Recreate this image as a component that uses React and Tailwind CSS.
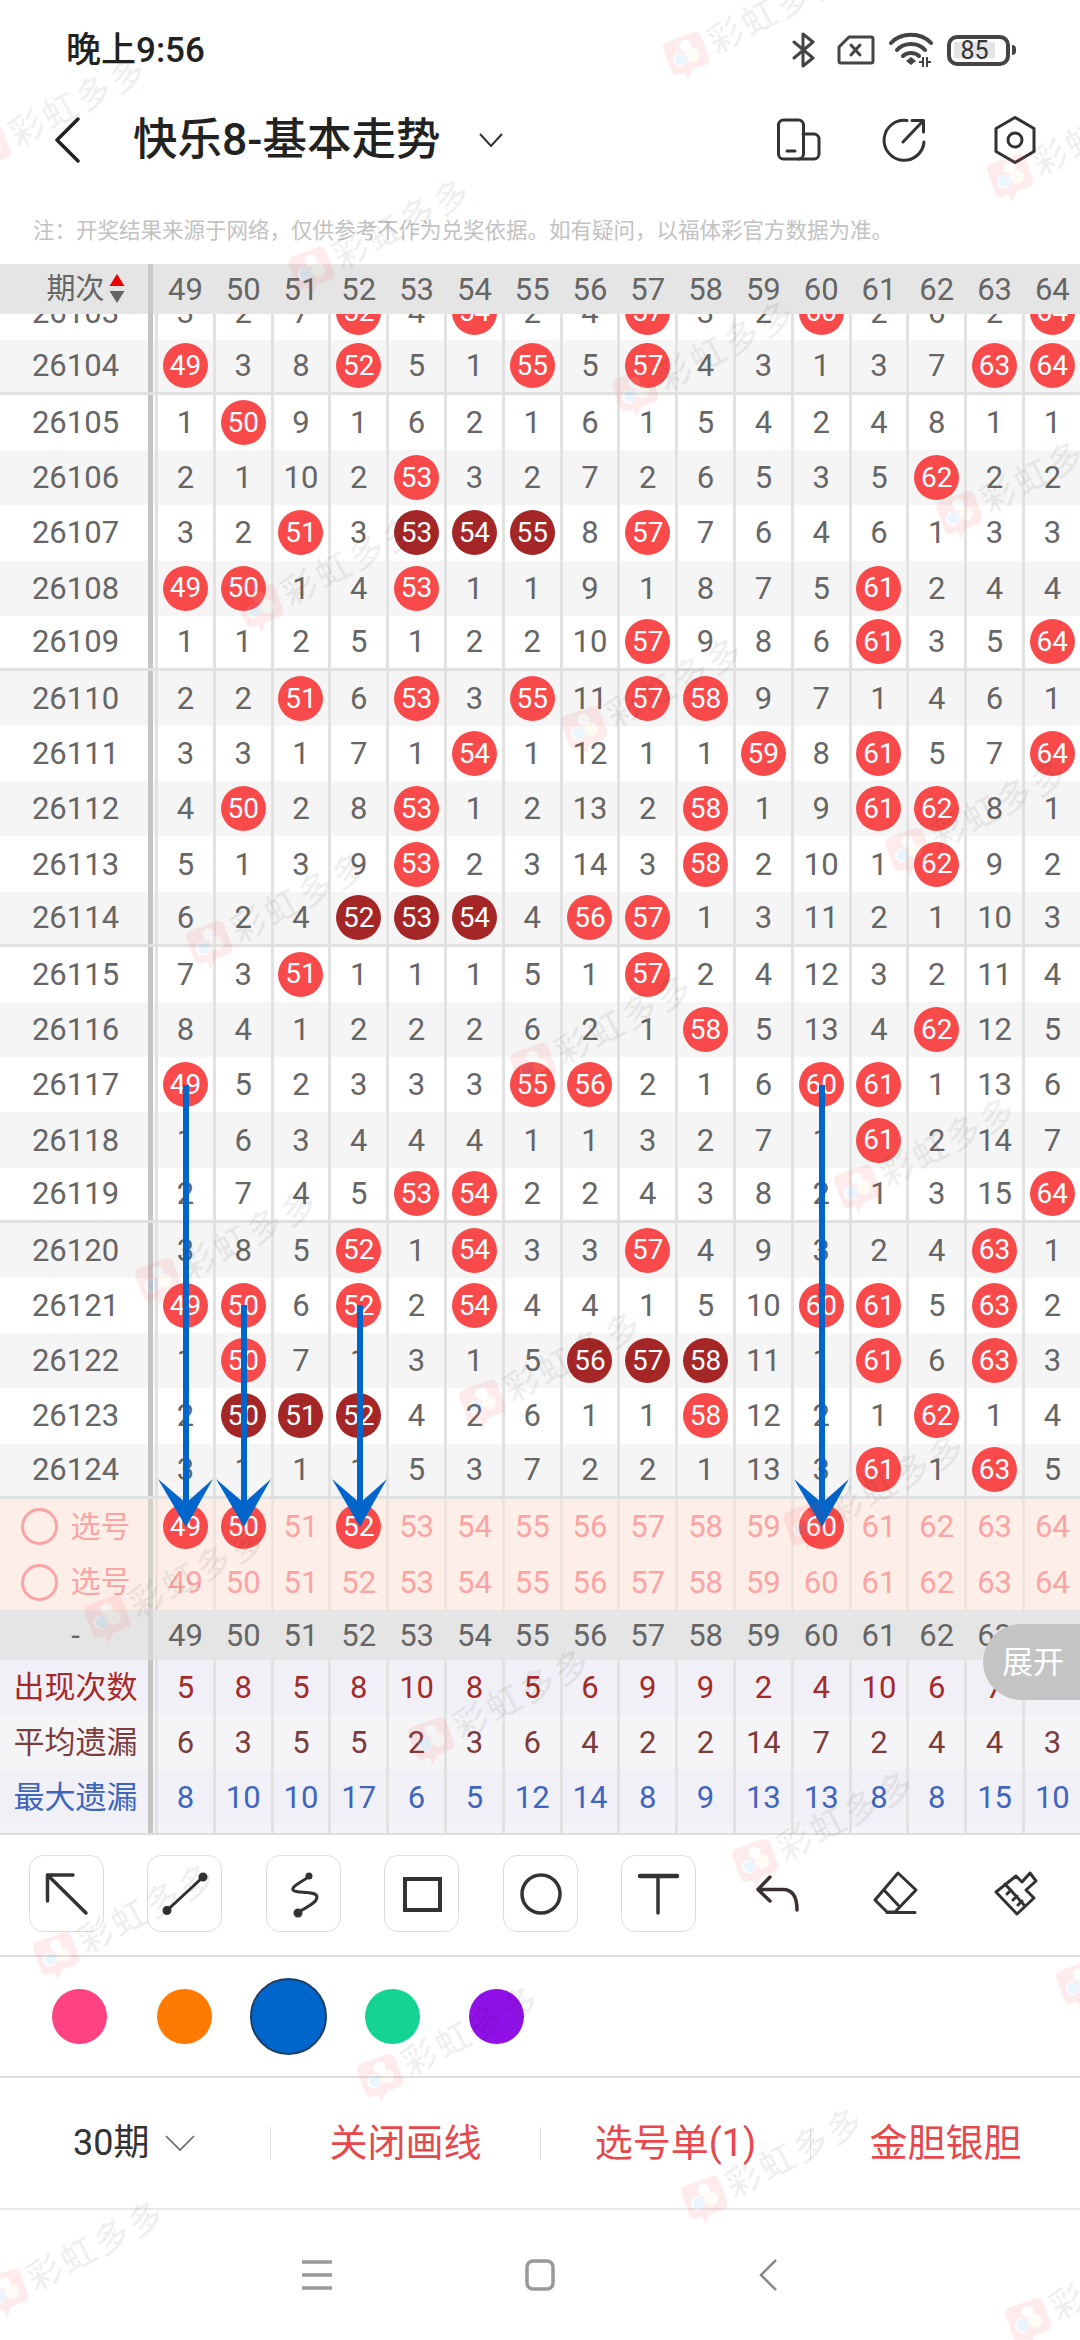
import React from "react";

const COLS = Array.from({ length: 16 }, (_, i) => 49 + i);

const ROWS = [
  ["26103", "3 2 7 52 4 54 2 4 57 3 2 60 2 6 2 64"],
  ["26104", "49 3 8 52 5 1 55 5 57 4 3 1 3 7 63 64"],
  ["26105", "1 50 9 1 6 2 1 6 1 5 4 2 4 8 1 1"],
  ["26106", "2 1 10 2 53 3 2 7 2 6 5 3 5 62 2 2"],
  ["26107", "3 2 51 3 53* 54* 55* 8 57 7 6 4 6 1 3 3"],
  ["26108", "49 50 1 4 53 1 1 9 1 8 7 5 61 2 4 4"],
  ["26109", "1 1 2 5 1 2 2 10 57 9 8 6 61 3 5 64"],
  ["26110", "2 2 51 6 53 3 55 11 57 58 9 7 1 4 6 1"],
  ["26111", "3 3 1 7 1 54 1 12 1 1 59 8 61 5 7 64"],
  ["26112", "4 50 2 8 53 1 2 13 2 58 1 9 61 62 8 1"],
  ["26113", "5 1 3 9 53 2 3 14 3 58 2 10 1 62 9 2"],
  ["26114", "6 2 4 52* 53* 54* 4 56 57 1 3 11 2 1 10 3"],
  ["26115", "7 3 51 1 1 1 5 1 57 2 4 12 3 2 11 4"],
  ["26116", "8 4 1 2 2 2 6 2 1 58 5 13 4 62 12 5"],
  ["26117", "49 5 2 3 3 3 55 56 2 1 6 60 61 1 13 6"],
  ["26118", "1 6 3 4 4 4 1 1 3 2 7 1 61 2 14 7"],
  ["26119", "2 7 4 5 53 54 2 2 4 3 8 2 1 3 15 64"],
  ["26120", "3 8 5 52 1 54 3 3 57 4 9 3 2 4 63 1"],
  ["26121", "49 50 6 52 2 54 4 4 1 5 10 60 61 5 63 2"],
  ["26122", "1 50 7 1 3 1 5 56* 57* 58* 11 1 61 6 63 3"],
  ["26123", "2 50* 51* 52* 4 2 6 1 1 58 12 2 1 62 1 4"],
  ["26124", "3 1 1 1 5 3 7 2 2 1 13 3 61 1 63 5"],
];

function Ball({ v, dark }) {
  return (
    <span
      className={
        "flex h-[45px] w-[45px] shrink-0 items-center justify-center rounded-full text-[28px] text-white " +
        (dark ? "bg-[#a52626]" : "bg-[#f84a4a]")
      }
    >
      {v}
    </span>
  );
}

function Cell({ v, line = "border-[#e2e2e2]", color = "text-[#666666]" }) {
  const s = String(v);
  const dark = s.endsWith("*");
  const n = parseInt(s, 10);
  return (
    <div className={"flex h-full w-[57.8px] shrink-0 items-center justify-center border-l-[3px] " + line + " " + color}>
      {n >= 49 && (s.endsWith("*") || s.endsWith("!")) ? <Ball v={n} dark={dark} /> : n >= 49 && color === "text-[#666666]" ? <Ball v={n} /> : s}
    </div>
  );
}

function Label({ children, className = "" }) {
  return (
    <div className={"flex h-full w-[153px] shrink-0 items-center justify-center border-r-[5px] border-[#c4c4c4] pl-[3px] " + className}>
      {children}
    </div>
  );
}

function DataRow({ id, vals, index }) {
  const gray = index % 2 === 1;
  const rule = index % 5 === 1;
  return (
    <div className={"flex h-[55.2px] items-stretch " + (gray ? "bg-[#f5f5f5] " : "bg-white ") + (rule ? "border-b-[3px] border-[#e0e0e0]" : "")}>
      <Label className="text-[#666666]">{id}</Label>
      <div className="ml-[2px] flex">
        {vals.split(" ").map((v, i) => (
          <Cell key={i} v={v} />
        ))}
      </div>
    </div>
  );
}

function SelectRow({ balls = [] }) {
  return (
    <div className="flex h-[55.5px] items-stretch bg-[#fdeee8] text-[#fca4a4]">
      <Label className="gap-[13px] border-[#d8cfcb]">
        <span className="h-[37px] w-[37px] rounded-full border-[3px] border-[#fca4a4]" />
        <span className="text-[30px]">选号</span>
      </Label>
      <div className="ml-[2px] flex">
        {COLS.map((c) => (
          <Cell key={c} v={balls.includes(c) ? c + "!" : c} line="border-[#efe3de]" color="text-[#fca4a4]" />
        ))}
      </div>
    </div>
  );
}

function StatRow({ label, vals, color, bg }) {
  return (
    <div className={"flex h-[55px] items-stretch " + bg + " " + color}>
      <Label>{label}</Label>
      <div className="ml-[2px] flex">
        {vals.split(" ").map((v, i) => (
          <Cell key={i} v={v} color={color} />
        ))}
      </div>
    </div>
  );
}

function PlainHeader({ label }) {
  return (
    <div className="flex h-[50px] items-stretch bg-[#e5e5e5] text-[#666666]">
      <Label className="border-[#d4d4d4]">{label}</Label>
      <div className="ml-[2px] flex">
        {COLS.map((c) => (
          <div key={c} className="flex w-[57.8px] shrink-0 items-center justify-center pl-[3px]">
            {c}
          </div>
        ))}
      </div>
    </div>
  );
}

function Watermarks() {
  const marks = [];
  for (let i = -8; i < 12; i++) {
    for (let j = -8; j < 12; j++) {
      const x = 690 + 324 * i + 375 * j;
      const y = 65 + 122 * i - 215 * j;
      if (x > -40 && x < 1120 && y > -40 && y < 2400) marks.push([x, y]);
    }
  }
  return (
    <div className="pointer-events-none absolute inset-0 z-20 overflow-hidden">
      {marks.map(([x, y]) => (
        <div
          key={x + "-" + y}
          className="absolute flex origin-left -rotate-[28deg] items-center"
          style={{ left: x - 22, top: y - 22 }}
        >
          <svg width="44" height="48" viewBox="0 0 44 48" className="rotate-[8deg] opacity-[0.09]">
            <path d="M8 3H36a6 6 0 0 1 6 6V32a6 6 0 0 1-6 6H22L14 46V38H8a6 6 0 0 1-6-6V9a6 6 0 0 1 6-6Z" fill="#f33" />
            <circle cx="14" cy="24" r="7" fill="#fff" />
            <circle cx="15" cy="24" r="6" fill="#39f" />
            <circle cx="28" cy="24" r="7" fill="#ffe9a8" />
            <circle cx="24" cy="13" r="6" fill="#fff" />
          </svg>
          <span className="ml-[4px] text-[35px] font-medium leading-none tracking-[3px] whitespace-nowrap text-black/[0.065]">彩虹多多</span>
        </div>
      ))}
    </div>
  );
}

function Arrows() {
  const items = [
    [186, 1085],
    [244, 1305],
    [360, 1305],
    [822, 1085],
  ];
  return (
    <svg className="pointer-events-none absolute inset-0 z-10" width="1080" height="2340" viewBox="0 0 1080 2340">
      {items.map(([x, y]) => (
        <g key={x}>
          <rect x={x - 3} y={y} width="6" height={1510 - y} fill="#0066cc" />
          <polygon points={`${x - 28},1479 ${x},1503 ${x + 27},1479 ${x},1527`} fill="#0066cc" />
        </g>
      ))}
    </svg>
  );
}

const ink = { fill: "none", stroke: "#333333", strokeLinecap: "round", strokeLinejoin: "round" };

function StatusIcons() {
  return (
    <div className="ml-auto mr-[64px] flex items-center">
      <svg width="24" height="36" viewBox="0 0 24 36" {...ink} strokeWidth="3" stroke="#444444">
        <path d="M2 10 21 26 11 34V2L21 10 2 26" />
      </svg>
      <svg className="ml-[21px]" width="38" height="30" viewBox="0 0 38 30" {...ink} strokeWidth="3" stroke="#444444">
        <path d="M12 2H34a2 2 0 0 1 2 2V26a2 2 0 0 1-2 2H4a2 2 0 0 1-2-2V12Z" />
        <path d="M14 10 23 20M23 10 14 20" />
      </svg>
      <svg className="ml-[14px]" width="46" height="36" viewBox="0 0 46 36" fill="none">
        <path d="M2 11C12 0 32 0 42 11M8 18C15 10 29 10 36 18M14 24C18 20 26 20 30 24" stroke="#444444" strokeWidth="4" strokeLinecap="round" />
        <path d="M17 29 22 25 27 29 22 33Z" fill="#444444" />
        <path d="M34 25V35M38 25V35M30 30H33M39 30H42" stroke="#444444" strokeWidth="2" />
      </svg>
      <div className="ml-[12px] flex h-[31px] w-[63px] items-center justify-start rounded-[10px] border-[4px] border-[#444444] pl-[3px]">
        <span className="flex h-[16px] w-[41px] items-center justify-center bg-[#e5e5e5] text-[25px] font-normal leading-none text-[#333333]">85</span>
      </div>
      <span className="ml-[2px] h-[10px] w-[4px] rounded-r-sm bg-[#444444]" />
    </div>
  );
}

function NavIcons() {
  return (
    <div className="ml-auto mr-[35px] flex items-center">
      <svg width="60" height="60" viewBox="0 0 60 60" {...ink} strokeWidth="3">
        <rect x="9.5" y="10" width="25" height="39" rx="5" />
        <path d="M34 24H45a5 5 0 0 1 5 5V44a5 5 0 0 1-5 5H30" />
        <path d="M18 41H26" />
      </svg>
      <svg className="ml-[45px]" width="60" height="60" viewBox="0 0 60 60" {...ink} strokeWidth="3">
        <path d="M33 10.5A20 20 0 1 0 50 32" />
        <path d="M29 32 49 11M38 10.5H49.5V22" />
      </svg>
      <svg className="ml-[51px]" width="60" height="60" viewBox="0 0 60 60" {...ink} strokeWidth="3">
        <path d="M30 7.5 49 18.5V41.5L30 52.5 11 41.5V18.5Z" />
        <circle cx="30" cy="30" r="7" />
      </svg>
    </div>
  );
}

function Tool({ boxed = true, children }) {
  return (
    <div className={"flex h-[77px] w-[75px] shrink-0 items-center justify-center rounded-[14px] " + (boxed ? "border border-[#dddddd]" : "")}>
      <svg width="60" height="60" viewBox="0 0 60 60" {...ink} strokeWidth="3">
        {children}
      </svg>
    </div>
  );
}

function Toolbar() {
  return (
    <div className="flex h-[122px] items-start gap-[43.4px] border-b-[2px] border-[#dddddd] pl-[29px] pt-[20px]">
      <Tool>
        <path d="M36 11H10.5V37M10.5 11 49 49" strokeWidth="3.5" />
      </Tool>
      <Tool>
        <path d="M12 46.5 48 13" />
        <circle cx="12" cy="46.5" r="3" fill="#333333" />
        <circle cx="48" cy="13" r="3" fill="#333333" />
      </Tool>
      <Tool>
        <path d="M36 12C30 18 18 22 20 26 22 30 44 26 44 33 44 40 30 44 25 49" />
        <circle cx="36" cy="12" r="2" fill="#333333" />
        <circle cx="25" cy="49" r="3" fill="#333333" />
      </Tool>
      <Tool>
        <rect x="13" y="15" width="35" height="31" strokeLinejoin="miter" strokeWidth="4" />
      </Tool>
      <Tool>
        <circle cx="31" cy="30" r="19" strokeWidth="3.5" />
      </Tool>
      <Tool>
        <path d="M12 12H49" strokeWidth="4.5" />
        <path d="M30 12V49" strokeWidth="3.5" />
      </Tool>
      <Tool boxed={false}>
        <path d="M23 13 11 25.5 23 37M11 25.5H36Q50 25.5 50 46" stroke="#3a3030" strokeWidth="3.5" />
      </Tool>
      <Tool boxed={false}>
        <path d="M33 9 51 26 30 48H22L10 36ZM19 26 33 41M22 48.5H50" />
      </Tool>
      <Tool boxed={false}>
        <path d="M12 28 33 50 50 34 42 26 52 17 46 9 38 18 32 12ZM21 20 41 42M27 26 23 30M33 32 29 36M38 37 34 41" />
      </Tool>
    </div>
  );
}

function Swatches() {
  return (
    <div className="flex h-[121px] items-center border-b-[2px] border-[#dddddd] pl-[52px]">
      <span className="h-[55px] w-[55px] rounded-full bg-[#ff4281]" />
      <span className="ml-[50px] h-[55px] w-[55px] rounded-full bg-[#ff7a00]" />
      <span className="ml-[38px] h-[77px] w-[77px] rounded-full border-[2px] border-[#1d3f66] bg-[#0066cc]" />
      <span className="ml-[38px] h-[55px] w-[55px] rounded-full bg-[#15d493]" />
      <span className="ml-[49px] h-[55px] w-[55px] rounded-full bg-[#9010e8]" />
    </div>
  );
}

function BottomBar() {
  const sep = <span className="h-[33px] w-px shrink-0 bg-[#e2e2e2]" />;
  const red = "flex flex-1 items-center justify-center text-[38px] text-[#e8484d]";
  return (
    <div className="flex h-[132px] items-center border-b-[2px] border-[#e8e8e8]">
      <div className="flex w-[270px] shrink-0 items-center pl-[73px] text-[36px] text-[#333333]">
        30期
        <svg className="ml-[16px]" width="30" height="18" viewBox="0 0 30 18" fill="none" stroke="#666666" strokeWidth="1.6">
          <path d="M1 2 15 16 29 2" />
        </svg>
      </div>
      {sep}
      <div className={red}>关闭画线</div>
      {sep}
      <div className={red}>选号单(1)</div>
      {sep}
      <div className={red}>金胆银胆</div>
    </div>
  );
}

function SystemNav() {
  return (
    <div className="flex h-[130px] items-center">
      <svg className="ml-[302px]" width="30" height="30" viewBox="0 0 30 30" fill="none" stroke="#999999" strokeWidth="3.5">
        <path d="M0 2H30M0 15H30M0 28H30" />
      </svg>
      <svg className="ml-[193px]" width="30" height="32" viewBox="0 0 30 32" fill="none" stroke="#999999" strokeWidth="3.5">
        <rect x="2" y="2" width="26" height="28" rx="6" />
      </svg>
      <svg className="ml-[203px]" width="20" height="32" viewBox="0 0 20 32" fill="none" stroke="#888888" strokeWidth="2.5">
        <path d="M18 1 3 16 18 31" />
      </svg>
    </div>
  );
}

export default function App() {
  return (
    <div className="relative h-[2340px] w-[1080px] overflow-hidden bg-white font-[Roboto,'Noto_Sans_CJK_SC',sans-serif] text-[31px] leading-none">
      {/* status bar */}
      <div className="flex h-[100px] items-center">
        <span className="ml-[66px] text-[35px] font-medium text-[#222222]">晚上9:56</span>
        <StatusIcons />
      </div>

      {/* nav bar */}
      <div className="flex h-[80px] items-center">
        <svg className="ml-[54px]" width="26" height="46" viewBox="0 0 26 46" fill="none" stroke="#222222" strokeWidth="3.5" strokeLinecap="round" strokeLinejoin="round">
          <path d="M24 2 3 23 24 44" />
        </svg>
        <span className="ml-[53px] whitespace-nowrap text-[44.5px] font-medium text-[#222222]">快乐8-基本走势</span>
        <svg className="ml-[39px]" width="24" height="14" viewBox="0 0 24 14" fill="none" stroke="#333333" strokeWidth="2">
          <path d="M1 1 12 13 23 1" />
        </svg>
        <NavIcons />
      </div>

      {/* note */}
      <div className="flex h-[84px] items-start pl-[33px] pt-[40px] text-[21.5px] whitespace-nowrap text-[#c2c2c2]">
        注：开奖结果来源于网络，仅供参考不作为兑奖依据。如有疑问，以福体彩官方数据为准。
      </div>

      {/* table */}
      <div className="relative">
        <div className="flex h-[50px] items-stretch bg-[#e5e5e5] text-[#666666]">
          <Label className="gap-[4px] border-[#c8c8c8] pl-[0px]">
            <span className="ml-[20px] text-[29px]">期次</span>
            <svg width="16" height="30" viewBox="0 0 16 30">
              <polygon points="8,0 15.5,12 0.5,12" fill="#ee0000" />
              <polygon points="0.5,17 15.5,17 8,29" fill="#666666" />
            </svg>
          </Label>
          <div className="ml-[2px] flex">
            {COLS.map((c) => (
              <div key={c} className="flex w-[57.8px] shrink-0 items-center justify-center pl-[3px]">
                {c}
              </div>
            ))}
          </div>
        </div>

        <div className="h-[1185px] overflow-hidden">
          <div className="-mt-[29.4px]">
            {ROWS.map(([id, vals], i) => (
              <DataRow key={id} id={id} vals={vals} index={i} />
            ))}
          </div>
        </div>

        <SelectRow balls={[49, 50, 52, 60]} />
        <SelectRow />
        <PlainHeader label="-" />
        <StatRow label="出现次数" vals="5 8 5 8 10 8 5 6 9 9 2 4 10 6 7 2" color="text-[#a52a2a]" bg="bg-[#f1f0f6]" />
        <StatRow label="平均遗漏" vals="6 3 5 5 2 3 6 4 2 2 14 7 2 4 4 3" color="text-[#7d3c3c]" bg="bg-[#f5f5f7]" />
        <StatRow label="最大遗漏" vals="8 10 10 17 6 5 12 14 8 9 13 13 8 8 15 10" color="text-[#3f66bf]" bg="bg-[#f1f0f6]" />
        <div className="flex h-[10px] items-stretch border-b-[2px] border-[#dddddd] bg-[#f5f5f7]">
          <Label />
          <div className="ml-[2px] flex">
            {COLS.map((c) => (
              <div key={c} className="w-[57.8px] shrink-0 border-l-[3px] border-[#e2e2e2]" />
            ))}
          </div>
        </div>

        <div className="absolute right-0 top-[1360px] z-30 flex h-[76px] w-[97px] items-center justify-end rounded-l-[38px] bg-[#c4c4c4] pr-[16px] text-[31px] text-white">
          展开
        </div>
      </div>

      <Toolbar />
      <Swatches />
      <BottomBar />
      <SystemNav />

      <Arrows />
      <Watermarks />
    </div>
  );
}
